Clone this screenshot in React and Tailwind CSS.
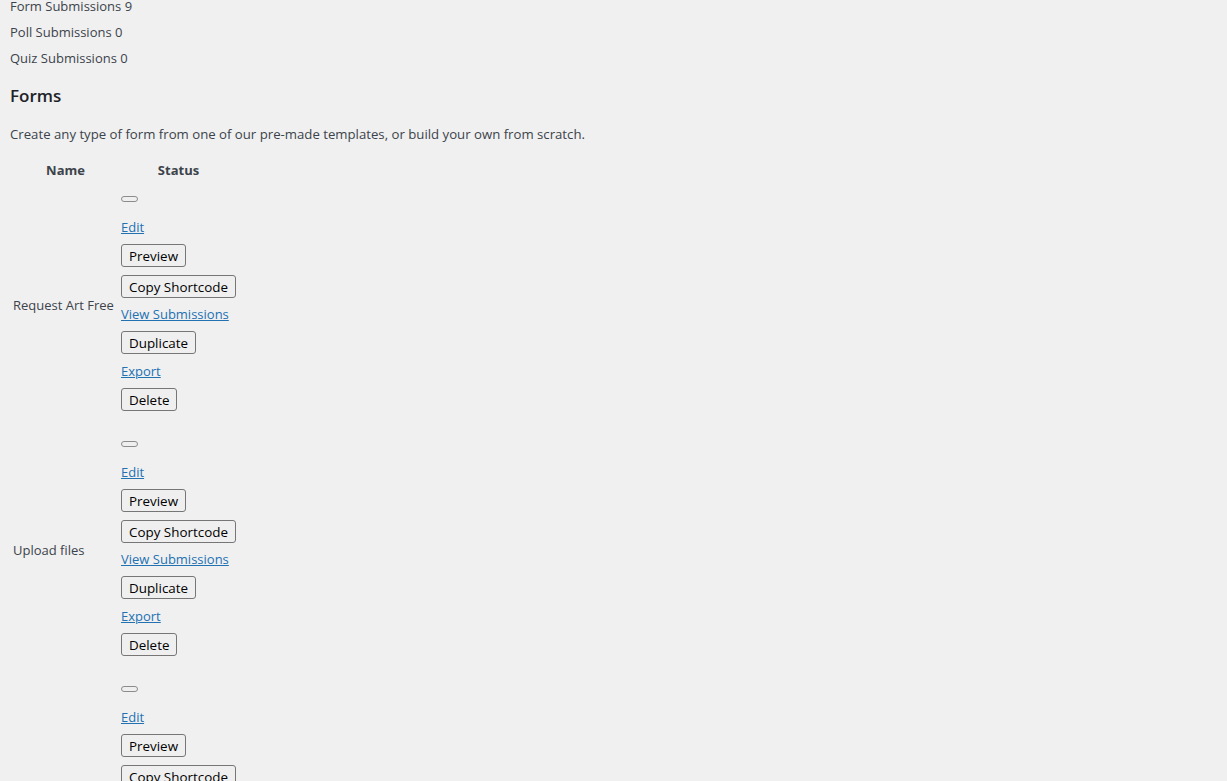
const counts = [
  { label: "Form Submissions", value: 9 },
  { label: "Poll Submissions", value: 0 },
  { label: "Quiz Submissions", value: 0 },
];

const forms = [
  { id: 1, name: "Request Art Free" },
  { id: 2, name: "Upload files" },
  { id: 3, name: "Contact Us" },
];

function Btn({ children, className = "" }) {
  return (
    <button
      className={`h-[23px] pt-[2px] px-[7px] border border-[#767676] rounded-[3px] bg-[#efefef] text-black text-[13.4px] leading-none ${className}`}
    >
      {children}
    </button>
  );
}

function Link({ children, className = "" }) {
  return (
    <a href="#" className={`h-5 leading-5 underline text-[#2271b1] ${className}`}>
      {children}
    </a>
  );
}

function FormRow({ form }) {
  return (
    <tr>
      <td className="pl-[3px] pr-[7px] pt-[18px] pb-[11px] align-middle whitespace-nowrap">
        {form.name}
      </td>
      <td className="pt-[16px] pb-[14px] align-top">
        <div className="flex flex-col items-start">
          <button className="w-[17px] h-[6px] rounded-full border border-[#8c8c8c] bg-[#efefef]" />
          <Link className="mt-[15px]">Edit</Link>
          <Btn className="mt-[7px]">Preview</Btn>
          <Btn className="mt-[8px]">Copy Shortcode</Btn>
          <Link className="mt-[6px]">View Submissions</Link>
          <Btn className="mt-[7px]">Duplicate</Btn>
          <Link className="mt-[7px]">Export</Link>
          <Btn className="mt-[7px]">Delete</Btn>
        </div>
      </td>
    </tr>
  );
}

export default function App() {
  return (
    <div className="min-h-screen bg-[#f0f0f1] px-[10px] text-[13px] text-[#3c434a] font-['Segoe_UI','Open_Sans',sans-serif] overflow-hidden">
      <div className="-mt-[7px]">
        {counts.map((c) => (
          <div key={c.label} className="h-[26px] leading-[26px]">
            {c.label} {c.value}
          </div>
        ))}
      </div>
      <h2 className="mt-[12px] h-[26px] leading-[26px] text-[17px] font-semibold text-[#1d2327]">
        Forms
      </h2>
      <p className="mt-[15px] h-5 leading-5 text-[13.2px]">
        Create any type of form from one of our pre-made templates, or build your own from scratch.
      </p>
      <table className="mt-[16px] border-collapse">
        <thead>
          <tr>
            <th className="w-[111px] h-5 leading-5 text-center font-bold">Name</th>
            <th className="w-[115px] h-5 leading-5 text-center font-bold">Status</th>
          </tr>
        </thead>
        <tbody>
          {forms.map((f) => (
            <FormRow key={f.id} form={f} />
          ))}
        </tbody>
      </table>
    </div>
  );
}
